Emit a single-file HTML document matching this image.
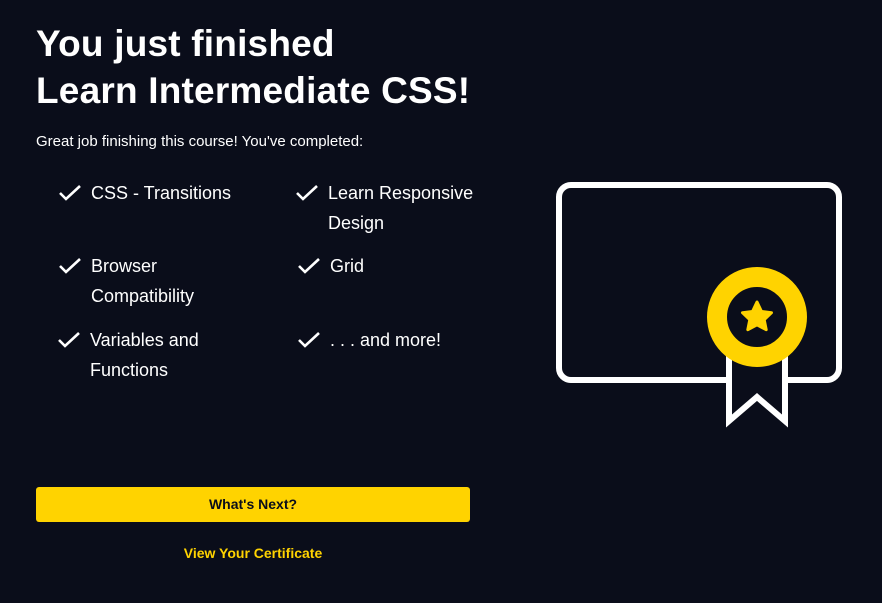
<!DOCTYPE html><html><head><style>
body{margin:0;width:882px;height:603px;background:#0a0d1a;color:#fff;font-family:"Liberation Sans",sans-serif;position:relative;overflow:hidden}
h1{position:absolute;left:36px;top:20px;margin:0;font-size:37px;line-height:47px;font-weight:bold;letter-spacing:0.2px}
.p{position:absolute;left:36px;top:133px;font-size:15px}
.it{position:absolute;font-size:18px;line-height:30px;width:180px}
.it svg{position:absolute;left:-33px;top:6px}
.btn{position:absolute;left:36px;top:487px;width:434px;height:35px;background:#ffd300;border-radius:3px;color:#0a0d1a;font-weight:bold;font-size:14px;text-align:center;line-height:35px}
.lk{position:absolute;left:36px;width:434px;top:545px;text-align:center;color:#ffd300;font-weight:bold;font-size:14px}
</style></head><body>
<h1>You just finished<br>Learn Intermediate CSS!</h1>
<div class="p">Great job finishing this course! You've completed:</div>
<div class="it" style="left:91px;top:178px"><svg width="24" height="18"><path d="M2 9l6 6L22 2" stroke="#fff" stroke-width="2.6" fill="none"/></svg>CSS - Transitions</div>
<div class="it" style="left:91px;top:251px"><svg width="24" height="18"><path d="M2 9l6 6L22 2" stroke="#fff" stroke-width="2.6" fill="none"/></svg>Browser<br>Compatibility</div>
<div class="it" style="left:90px;top:325px"><svg width="24" height="18"><path d="M2 9l6 6L22 2" stroke="#fff" stroke-width="2.6" fill="none"/></svg>Variables and<br>Functions</div>
<div class="it" style="left:328px;top:178px"><svg width="24" height="18"><path d="M2 9l6 6L22 2" stroke="#fff" stroke-width="2.6" fill="none"/></svg>Learn Responsive<br>Design</div>
<div class="it" style="left:330px;top:251px"><svg width="24" height="18"><path d="M2 9l6 6L22 2" stroke="#fff" stroke-width="2.6" fill="none"/></svg>Grid</div>
<div class="it" style="left:330px;top:325px"><svg width="24" height="18"><path d="M2 9l6 6L22 2" stroke="#fff" stroke-width="2.6" fill="none"/></svg>. . . and more!</div>
<svg style="position:absolute;left:0;top:0" width="882" height="603">
<path d="M726 380H571a12 12 0 0 1-12-12V197a12 12 0 0 1 12-12h256a12 12 0 0 1 12 12v171a12 12 0 0 1-12 12H788" stroke="#fff" stroke-width="6" fill="none"/>
<path d="M729 355V421L757 397L785 421V355" stroke="#fff" stroke-width="6" fill="#0a0d1a"/>
<circle cx="757" cy="317" r="40" stroke="#ffd300" stroke-width="20" fill="#0a0d1a"/>
<path d="M757 302l4.5 9.5 10 1.2-7.3 7 2 10L757 324.8l-9.2 4.9 2-10-7.3-7 10-1.2z" fill="#ffd300" stroke="#ffd300" stroke-width="3" stroke-linejoin="round"/>
</svg>
<div class="btn">What's Next?</div>
<div class="lk">View Your Certificate</div>
</body></html>
